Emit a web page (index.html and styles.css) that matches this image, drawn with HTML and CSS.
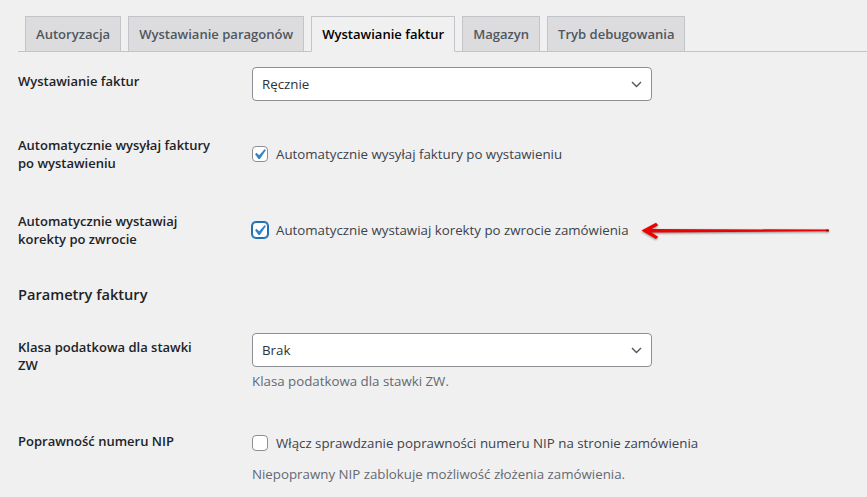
FILE: index.html
```html
<!DOCTYPE html>
<html lang="pl">
<head>
<meta charset="utf-8">
<title>Ustawienia</title>
<link rel="stylesheet" href="styles.css">
</head>
<body>
<div class="wrap">
  <nav class="tabs">
    <a class="tab">Autoryzacja</a>
    <a class="tab">Wystawianie paragonów</a>
    <a class="tab active">Wystawianie faktur</a>
    <a class="tab">Magazyn</a>
    <a class="tab">Tryb debugowania</a>
  </nav>

  <div class="form">
    <div class="row">
      <div class="th">Wystawianie faktur</div>
      <div class="td">
        <div class="select"><span>Ręcznie</span>
          <svg class="chev" width="11" height="7" viewBox="0 0 11 7"><path d="M1 1l4.5 4.5L10 1" fill="none" stroke="#50575e" stroke-width="1.4"/></svg>
        </div>
      </div>
    </div>
    <div class="row">
      <div class="th">Automatycznie wysyłaj faktury<br>po wystawieniu</div>
      <div class="td">
        <label class="check"><span class="box"><svg width="21" height="21" viewBox="0 0 20 20"><path d="M14.83 4.89l1.34.94-5.81 8.38H9.02L5.78 9.67l1.34-1.25 2.57 2.4z" fill="#3582c4"/></svg></span>Automatycznie wysyłaj faktury po wystawieniu</label>
      </div>
    </div>
    <div class="row">
      <div class="th">Automatycznie wystawiaj<br>korekty po zwrocie</div>
      <div class="td">
        <label class="check"><span class="box focus"><svg width="21" height="21" viewBox="0 0 20 20"><path d="M14.83 4.89l1.34.94-5.81 8.38H9.02L5.78 9.67l1.34-1.25 2.57 2.4z" fill="#3582c4"/></svg></span>Automatycznie wystawiaj korekty po zwrocie zamówienia</label>
      </div>
    </div>
  </div>

  <h2 class="section">Parametry faktury</h2>

  <div class="form">
    <div class="row">
      <div class="th">Klasa podatkowa dla stawki<br>ZW</div>
      <div class="td top klasa">
        <div class="select"><span>Brak</span>
          <svg class="chev" width="11" height="7" viewBox="0 0 11 7"><path d="M1 1l4.5 4.5L10 1" fill="none" stroke="#50575e" stroke-width="1.4"/></svg>
        </div>
        <p class="desc">Klasa podatkowa dla stawki ZW.</p>
      </div>
    </div>
    <div class="row">
      <div class="th">Poprawność numeru NIP</div>
      <div class="td top nip">
        <label class="check tall"><span class="box"></span>Włącz sprawdzanie poprawności numeru NIP na stronie zamówienia</label>
        <p class="desc nipdesc">Niepoprawny NIP zablokuje możliwość złożenia zamówienia.</p>
      </div>
    </div>
  </div>
</div>

<svg class="arrow" width="200" height="28" viewBox="0 0 200 28">
  <path d="M5.5 12.6 L20 4.8 L22.2 7.2 L15.5 11 L192 11.6 L192.5 13.3 L15.5 14.6 L22.2 18.8 L20 21 Z" fill="#ec0000"/>
  <rect x="190" y="11.6" width="3" height="1.8" fill="#a00000"/>
</svg>
</body>
</html>
```

FILE: styles.css
```css
* { box-sizing: border-box; }

html, body {
  margin: 0;
  background: #f0f0f1;
}

body {
  font-family: "Open Sans", "Noto Sans", sans-serif;
  font-size: 13.3px;
  color: #3c434a;
  position: relative;
  min-height: 497px;
  overflow: hidden;
}

.wrap {
  padding-left: 18px;
}

/* Tabs */
.tabs {
  display: flex;
  align-items: flex-end;
  gap: 7px;
  padding: 16px 0 0 7px;
  border-bottom: 1px solid #c3c4c7;
}

.tab {
  display: block;
  padding: 5px 10px;
  line-height: 24px;
  font-size: 13.05px;
  font-weight: 600;
  color: #50575e;
  background: #dcdcde;
  border: 1px solid #c3c4c7;
  border-bottom: none;
  white-space: nowrap;
}

.tab.active {
  background: #f0f0f1;
  color: #000;
  border-bottom: 1px solid #f0f0f1;
  margin-bottom: -1px;
}

/* Form rows */
.row {
  display: grid;
  grid-template-columns: 234px 1fr;
}

.th {
  padding: 20px 10px 20px 0;
  font-weight: 600;
  font-size: 13px;
  line-height: 18px;
  color: #1d2327;
}

.td {
  padding: 15px 0;
  align-self: center;
}

.td.top { align-self: start; }
.td.klasa { padding-bottom: 22px; }
.td.nip { padding-top: 20px; padding-bottom: 14px; }

.select {
  height: 34px;
  width: 400px;
  display: flex;
  align-items: center;
  justify-content: space-between;
  padding: 0 9px 0 9px;
  background: #fff;
  border: 1px solid #8c8f94;
  border-radius: 4px;
  color: #2c3338;
}

.chev { display: block; }

.check {
  display: flex;
  align-items: center;
  gap: 8px;
  line-height: 18px;
  color: #3c434a;
  white-space: nowrap;
}

.check.tall { line-height: 22px; }

.box {
  width: 16px;
  height: 16px;
  flex: none;
  background: #fff;
  border: 1px solid #8c8f94;
  border-radius: 4px;
  overflow: visible;
}

.box svg {
  display: block;
  margin: -3px 0 0 -4px;
}

.box.focus {
  border-color: #2271b1;
  box-shadow: 0 0 0 1px #2271b1;
}

.desc {
  margin: 5px 0 0;
  line-height: 18px;
  color: #646970;
}

.desc.nipdesc { margin-top: 11px; }

.section {
  margin: 15px 0 13px;
  font-size: 14.6px;
  line-height: 22px;
  font-weight: 600;
  color: #1d2327;
}

/* Annotation arrow */
.arrow {
  position: absolute;
  left: 636px;
  top: 218px;
  filter: drop-shadow(0 1px 0.8px rgba(0, 0, 0, 0.45));
}
```
